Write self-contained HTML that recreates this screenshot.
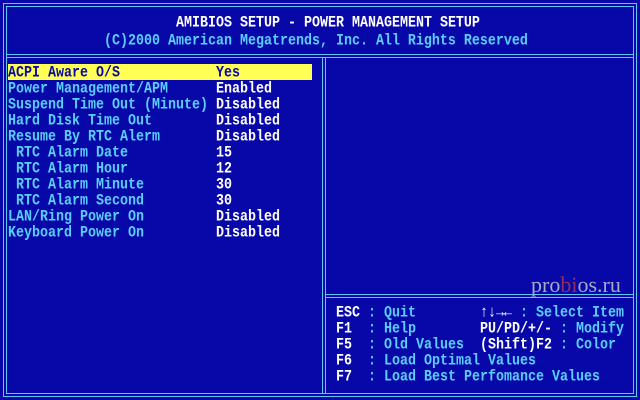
<!DOCTYPE html>
<html><head><style>
body{margin:0;width:640px;height:400px;background:#0808a8;overflow:hidden;position:relative;font-family:"Liberation Mono",monospace;font-weight:bold;font-size:13.33px}
.l{position:absolute;background:#5cc8f8}
.t{position:absolute;white-space:pre;line-height:16px;height:16px;transform:translateY(2px) scaleY(1.2);transform-origin:0 50%}
.c{color:#58d0ff}.w{color:#fff}
</style></head><body>
<div class="l" style="left:3px;top:3px;width:634px;height:1px"></div>
<div class="l" style="left:6px;top:6px;width:628px;height:1px"></div>
<div class="l" style="left:3px;top:396px;width:634px;height:1px"></div>
<div class="l" style="left:6px;top:393px;width:628px;height:1px"></div>
<div class="l" style="left:3px;top:3px;width:1px;height:394px"></div>
<div class="l" style="left:6px;top:6px;width:1px;height:388px"></div>
<div class="l" style="left:636px;top:3px;width:1px;height:394px"></div>
<div class="l" style="left:633px;top:6px;width:1px;height:388px"></div>
<div class="l" style="left:6px;top:54px;width:628px;height:1px"></div>
<div class="l" style="left:6px;top:57px;width:628px;height:1px"></div>
<div class="l" style="left:322px;top:57px;width:1px;height:337px"></div>
<div class="l" style="left:325px;top:57px;width:1px;height:337px"></div>
<div class="l" style="left:325px;top:294px;width:309px;height:1px"></div>
<div class="l" style="left:325px;top:297px;width:309px;height:1px"></div>

<div class="t w" style="left:176px;top:14px">AMIBIOS SETUP - POWER MANAGEMENT SETUP</div>
<div class="t c" style="left:104px;top:32px">(C)2000 American Megatrends, Inc. All Rights Reserved</div>

<div style="position:absolute;left:8px;top:64px;width:304px;height:16px;background:#ffff55"></div>
<div class="t" style="left:8px;top:64px;color:#0808a8">ACPI Aware O/S</div><div class="t" style="left:216px;top:64px;color:#0808a8">Yes</div>
<div class="t c" style="left:8px;top:80px">Power Management/APM</div><div class="t w" style="left:216px;top:80px">Enabled</div>
<div class="t c" style="left:8px;top:96px">Suspend Time Out (Minute)</div><div class="t w" style="left:216px;top:96px">Disabled</div>
<div class="t c" style="left:8px;top:112px">Hard Disk Time Out</div><div class="t w" style="left:216px;top:112px">Disabled</div>
<div class="t c" style="left:8px;top:128px">Resume By RTC Alerm</div><div class="t w" style="left:216px;top:128px">Disabled</div>
<div class="t c" style="left:16px;top:144px">RTC Alarm Date</div><div class="t w" style="left:216px;top:144px">15</div>
<div class="t c" style="left:16px;top:160px">RTC Alarm Hour</div><div class="t w" style="left:216px;top:160px">12</div>
<div class="t c" style="left:16px;top:176px">RTC Alarm Minute</div><div class="t w" style="left:216px;top:176px">30</div>
<div class="t c" style="left:16px;top:192px">RTC Alarm Second</div><div class="t w" style="left:216px;top:192px">30</div>
<div class="t c" style="left:8px;top:208px">LAN/Ring Power On</div><div class="t w" style="left:216px;top:208px">Disabled</div>
<div class="t c" style="left:8px;top:224px">Keyboard Power On</div><div class="t w" style="left:216px;top:224px">Disabled</div>

<div style="position:absolute;left:531px;top:272px;font-family:'Liberation Serif',serif;font-weight:normal;font-size:22px;color:#a8a8c8">pro<span style="color:#903060">bi</span>os.ru</div>

<div class="t w" style="left:336px;top:304px">ESC</div><div class="t c" style="left:368px;top:304px">: Quit</div>
<div class="t w" style="left:480px;top:304px">↑↓→←</div><div class="t c" style="left:520px;top:304px">: Select Item</div>
<div class="t w" style="left:336px;top:320px">F1</div><div class="t c" style="left:368px;top:320px">: Help</div>
<div class="t w" style="left:480px;top:320px">PU/PD/+/-</div><div class="t c" style="left:560px;top:320px">: Modify</div>
<div class="t w" style="left:336px;top:336px">F5</div><div class="t c" style="left:368px;top:336px">: Old Values</div>
<div class="t w" style="left:480px;top:336px">(Shift)F2</div><div class="t c" style="left:560px;top:336px">: Color</div>
<div class="t w" style="left:336px;top:352px">F6</div><div class="t c" style="left:368px;top:352px">: Load Optimal Values</div>
<div class="t w" style="left:336px;top:368px">F7</div><div class="t c" style="left:368px;top:368px">: Load Best Perfomance Values</div>
</body></html>
